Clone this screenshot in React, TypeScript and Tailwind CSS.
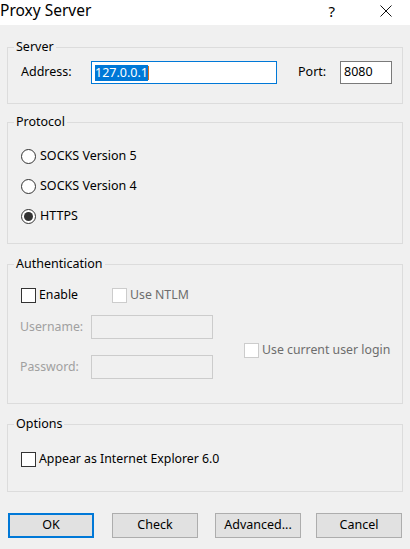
const font = { fontFamily: '"Noto Sans", "Liberation Sans", sans-serif' };

function Radio({ checked, label }: { checked?: boolean; label: string }) {
  return (
    <div className="flex h-[30px] items-center">
      <span className="flex h-[15px] w-[15px] items-center justify-center rounded-full border border-[#333333] bg-white">
        {checked && <span className="h-[9px] w-[9px] rounded-full bg-[#333333]" />}
      </span>
      <span className="ml-[4px] text-[12.5px] text-black">{label}</span>
    </div>
  );
}

function Check({ label, disabled }: { label: string; disabled?: boolean }) {
  return (
    <div className="flex items-center">
      <span
        className={
          disabled
            ? "h-[15px] w-[15px] border border-[#cccccc] bg-white"
            : "h-[15px] w-[15px] border border-[#333333] bg-white"
        }
      />
      <span className={disabled ? "ml-[3px] text-[12.3px] text-[#6d6d6d]" : "ml-[3px] text-[12.3px] text-black"}>
        {label}
      </span>
    </div>
  );
}

function Group({ title, className, children }: { title: string; className: string; children: React.ReactNode }) {
  return (
    <fieldset className={"mx-[7px] border border-[#dcdcdc] " + className}>
      <legend className="ml-[6px] px-[2px] text-[12.5px] leading-[14px] text-black">{title}</legend>
      {children}
    </fieldset>
  );
}

function Btn({ label, primary, className }: { label: string; primary?: boolean; className?: string }) {
  return (
    <button
      className={
        (primary
          ? "border-2 border-[#0078d7] "
          : "border border-[#adadad] ") +
        "flex h-[25px] w-[86px] items-center justify-center bg-[#e1e1e1] text-[12.5px] text-black " +
        (className ?? "")
      }
    >
      {label}
    </button>
  );
}

export default function App() {
  return (
    <div className="flex h-[549px] w-[410px] flex-col bg-[#f0f0f0]" style={font}>
      <div className="flex h-[25px] items-center bg-white pb-[3px]">
        <span className="text-[15.5px] text-black">Proxy Server</span>
        <span className="ml-auto mr-[45px] text-[15px] text-black">?</span>
        <svg className="mr-[18px]" width="12" height="12" viewBox="0 0 12 12">
          <path d="M0.5 0.5 L11.5 11.5 M11.5 0.5 L0.5 11.5" stroke="#111" strokeWidth="1" />
        </svg>
      </div>

      <Group title="Server" className="mt-[15px] h-[64px]">
        <div className="mt-[7px] flex items-center">
          <span className="ml-[13px] w-[70px] text-[12.5px] text-black">Address:</span>
          <div className="flex h-[23px] w-[186px] items-center border border-[#0078d7] bg-white pl-[3px]">
            <span className="bg-[#0078d7] text-[12.5px] leading-[16px] text-white">127.0.0.1</span>
            <span className="h-[14px] w-[1px] bg-[#d96b1c]" />
          </div>
          <span className="ml-[21px] w-[42px] text-[12.5px] text-black">Port:</span>
          <div className="flex h-[23px] w-[52px] items-center border border-[#7a7a7a] bg-white pl-[3px] text-[12.5px] text-black">
            8080
          </div>
        </div>
      </Group>

      <Group title="Protocol" className="mt-[11px] h-[129px]">
        <div className="ml-[13px] mt-[12px] flex flex-col">
          <Radio label="SOCKS Version 5" />
          <Radio label="SOCKS Version 4" />
          <Radio checked label="HTTPS" />
        </div>
      </Group>

      <Group title="Authentication" className="mt-[13px] h-[147px]">
        <div className="ml-[13px] mt-[15px] flex">
          <div className="flex flex-col">
            <div className="flex items-center">
              <div className="w-[91px]">
                <Check label="Enable" />
              </div>
              <Check disabled label="Use NTLM" />
            </div>
            <div className="mt-[11px] flex items-center">
              <span className="-ml-[1px] w-[71px] text-[12.3px] text-[#a0a0a0]">Username:</span>
              <div className="h-[24px] w-[122px] border border-[#cccccc] bg-[#f0f0f0]" />
            </div>
            <div className="mt-[16px] flex items-center">
              <span className="-ml-[1px] w-[71px] text-[12.3px] text-[#a0a0a0]">Password:</span>
              <div className="h-[24px] w-[122px] border border-[#cccccc] bg-[#f0f0f0]" />
            </div>
          </div>
          <div className="ml-[31px] mt-[55px]">
            <Check disabled label="Use current user login" />
          </div>
        </div>
      </Group>

      <Group title="Options" className="mt-[13px] h-[75px]">
        <div className="ml-[13px] mt-[19px]">
          <Check label="Appear as Internet Explorer 6.0" />
        </div>
      </Group>

      <div className="mt-[21px] flex px-[8px]">
        <Btn primary label="OK" />
        <Btn label="Check" className="ml-[18px]" />
        <Btn label="Advanced..." className="ml-[17px]" />
        <Btn label="Cancel" className="ml-[15px]" />
      </div>
    </div>
  );
}
